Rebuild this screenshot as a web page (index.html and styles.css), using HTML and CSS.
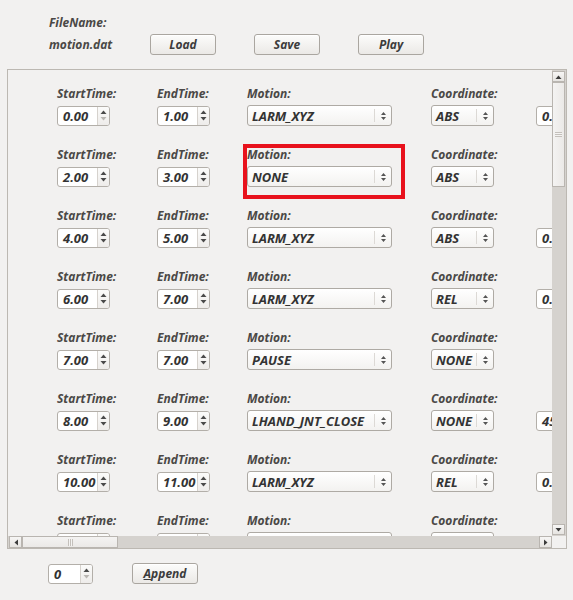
FILE: index.html
```html
<!DOCTYPE html>
<html>
<head>
<meta charset="utf-8">
<link rel="stylesheet" href="styles.css">
</head>
<body>
<div class="top">
  <span class="lbl">FileName:</span>
  <div class="toprow">
    <span class="lbl fname">motion.dat</span>
    <button class="btn">Load</button>
    <button class="btn">Save</button>
    <button class="btn">Play</button>
  </div>
</div>

<div class="frame">
  <div class="main">
    <div class="viewport">
      <div class="rows">
        <!-- row 1 -->
        <div class="row">
          <div class="cell"><span class="lbl">StartTime:</span><div class="w"><div class="spin"><span class="val">0.00</span><span class="arr"><svg class="up" width="7" height="4" viewBox="0 0 7 4"><path d="M0.5 4L3.5 0.5L6.5 4Z"/></svg><svg class="dn off" width="7" height="4" viewBox="0 0 7 4"><path d="M0.5 0L3.5 3.5L6.5 0Z"/></svg></span></div></div></div>
          <div class="cell"><span class="lbl">EndTime:</span><div class="w"><div class="spin"><span class="val">1.00</span><span class="arr"><svg class="up" width="7" height="4" viewBox="0 0 7 4"><path d="M0.5 4L3.5 0.5L6.5 4Z"/></svg><svg class="dn" width="7" height="4" viewBox="0 0 7 4"><path d="M0.5 0L3.5 3.5L6.5 0Z"/></svg></span></div></div></div>
          <div class="cell"><span class="lbl">Motion:</span><div class="w"><div class="combo wide"><span class="val">LARM_XYZ</span><span class="sep"></span><span class="ar"><svg width="7" height="10" viewBox="0 0 7 10"><path d="M1 4L3.5 1L6 4Z M1 6L3.5 9L6 6Z"/></svg></span></div></div></div>
          <div class="cell"><span class="lbl">Coordinate:</span><div class="w"><div class="combo narrow"><span class="val">ABS</span><span class="sep"></span><span class="ar"><svg width="7" height="10" viewBox="0 0 7 10"><path d="M1 4L3.5 1L6 4Z M1 6L3.5 9L6 6Z"/></svg></span></div></div></div>
          <div class="cell"><span class="lbl">&nbsp;</span><div class="w"><div class="spin"><span class="val">0.00</span></div></div></div>
        </div>
        <!-- row 2 -->
        <div class="row">
          <div class="cell"><span class="lbl">StartTime:</span><div class="w"><div class="spin"><span class="val">2.00</span><span class="arr"><svg class="up" width="7" height="4" viewBox="0 0 7 4"><path d="M0.5 4L3.5 0.5L6.5 4Z"/></svg><svg class="dn" width="7" height="4" viewBox="0 0 7 4"><path d="M0.5 0L3.5 3.5L6.5 0Z"/></svg></span></div></div></div>
          <div class="cell"><span class="lbl">EndTime:</span><div class="w"><div class="spin"><span class="val">3.00</span><span class="arr"><svg class="up" width="7" height="4" viewBox="0 0 7 4"><path d="M0.5 4L3.5 0.5L6.5 4Z"/></svg><svg class="dn" width="7" height="4" viewBox="0 0 7 4"><path d="M0.5 0L3.5 3.5L6.5 0Z"/></svg></span></div></div></div>
          <div class="cell hl"><span class="lbl">Motion:</span><div class="w"><div class="combo wide"><span class="val">NONE</span><span class="sep"></span><span class="ar"><svg width="7" height="10" viewBox="0 0 7 10"><path d="M1 4L3.5 1L6 4Z M1 6L3.5 9L6 6Z"/></svg></span></div></div><div class="redbox"></div></div>
          <div class="cell"><span class="lbl">Coordinate:</span><div class="w"><div class="combo narrow"><span class="val">ABS</span><span class="sep"></span><span class="ar"><svg width="7" height="10" viewBox="0 0 7 10"><path d="M1 4L3.5 1L6 4Z M1 6L3.5 9L6 6Z"/></svg></span></div></div></div>
          <div class="cell"></div>
        </div>
        <!-- row 3 -->
        <div class="row">
          <div class="cell"><span class="lbl">StartTime:</span><div class="w"><div class="spin"><span class="val">4.00</span><span class="arr"><svg class="up" width="7" height="4" viewBox="0 0 7 4"><path d="M0.5 4L3.5 0.5L6.5 4Z"/></svg><svg class="dn" width="7" height="4" viewBox="0 0 7 4"><path d="M0.5 0L3.5 3.5L6.5 0Z"/></svg></span></div></div></div>
          <div class="cell"><span class="lbl">EndTime:</span><div class="w"><div class="spin"><span class="val">5.00</span><span class="arr"><svg class="up" width="7" height="4" viewBox="0 0 7 4"><path d="M0.5 4L3.5 0.5L6.5 4Z"/></svg><svg class="dn" width="7" height="4" viewBox="0 0 7 4"><path d="M0.5 0L3.5 3.5L6.5 0Z"/></svg></span></div></div></div>
          <div class="cell"><span class="lbl">Motion:</span><div class="w"><div class="combo wide"><span class="val">LARM_XYZ</span><span class="sep"></span><span class="ar"><svg width="7" height="10" viewBox="0 0 7 10"><path d="M1 4L3.5 1L6 4Z M1 6L3.5 9L6 6Z"/></svg></span></div></div></div>
          <div class="cell"><span class="lbl">Coordinate:</span><div class="w"><div class="combo narrow"><span class="val">ABS</span><span class="sep"></span><span class="ar"><svg width="7" height="10" viewBox="0 0 7 10"><path d="M1 4L3.5 1L6 4Z M1 6L3.5 9L6 6Z"/></svg></span></div></div></div>
          <div class="cell"><span class="lbl">&nbsp;</span><div class="w"><div class="spin"><span class="val">0.00</span></div></div></div>
        </div>
        <!-- row 4 -->
        <div class="row">
          <div class="cell"><span class="lbl">StartTime:</span><div class="w"><div class="spin"><span class="val">6.00</span><span class="arr"><svg class="up" width="7" height="4" viewBox="0 0 7 4"><path d="M0.5 4L3.5 0.5L6.5 4Z"/></svg><svg class="dn" width="7" height="4" viewBox="0 0 7 4"><path d="M0.5 0L3.5 3.5L6.5 0Z"/></svg></span></div></div></div>
          <div class="cell"><span class="lbl">EndTime:</span><div class="w"><div class="spin"><span class="val">7.00</span><span class="arr"><svg class="up" width="7" height="4" viewBox="0 0 7 4"><path d="M0.5 4L3.5 0.5L6.5 4Z"/></svg><svg class="dn" width="7" height="4" viewBox="0 0 7 4"><path d="M0.5 0L3.5 3.5L6.5 0Z"/></svg></span></div></div></div>
          <div class="cell"><span class="lbl">Motion:</span><div class="w"><div class="combo wide"><span class="val">LARM_XYZ</span><span class="sep"></span><span class="ar"><svg width="7" height="10" viewBox="0 0 7 10"><path d="M1 4L3.5 1L6 4Z M1 6L3.5 9L6 6Z"/></svg></span></div></div></div>
          <div class="cell"><span class="lbl">Coordinate:</span><div class="w"><div class="combo narrow"><span class="val">REL</span><span class="sep"></span><span class="ar"><svg width="7" height="10" viewBox="0 0 7 10"><path d="M1 4L3.5 1L6 4Z M1 6L3.5 9L6 6Z"/></svg></span></div></div></div>
          <div class="cell"><span class="lbl">&nbsp;</span><div class="w"><div class="spin"><span class="val">0.00</span></div></div></div>
        </div>
        <!-- row 5 -->
        <div class="row">
          <div class="cell"><span class="lbl">StartTime:</span><div class="w"><div class="spin"><span class="val">7.00</span><span class="arr"><svg class="up" width="7" height="4" viewBox="0 0 7 4"><path d="M0.5 4L3.5 0.5L6.5 4Z"/></svg><svg class="dn" width="7" height="4" viewBox="0 0 7 4"><path d="M0.5 0L3.5 3.5L6.5 0Z"/></svg></span></div></div></div>
          <div class="cell"><span class="lbl">EndTime:</span><div class="w"><div class="spin"><span class="val">7.00</span><span class="arr"><svg class="up" width="7" height="4" viewBox="0 0 7 4"><path d="M0.5 4L3.5 0.5L6.5 4Z"/></svg><svg class="dn" width="7" height="4" viewBox="0 0 7 4"><path d="M0.5 0L3.5 3.5L6.5 0Z"/></svg></span></div></div></div>
          <div class="cell"><span class="lbl">Motion:</span><div class="w"><div class="combo wide"><span class="val">PAUSE</span><span class="sep"></span><span class="ar"><svg width="7" height="10" viewBox="0 0 7 10"><path d="M1 4L3.5 1L6 4Z M1 6L3.5 9L6 6Z"/></svg></span></div></div></div>
          <div class="cell"><span class="lbl">Coordinate:</span><div class="w"><div class="combo narrow"><span class="val">NONE</span><span class="sep"></span><span class="ar"><svg width="7" height="10" viewBox="0 0 7 10"><path d="M1 4L3.5 1L6 4Z M1 6L3.5 9L6 6Z"/></svg></span></div></div></div>
          <div class="cell"></div>
        </div>
        <!-- row 6 -->
        <div class="row">
          <div class="cell"><span class="lbl">StartTime:</span><div class="w"><div class="spin"><span class="val">8.00</span><span class="arr"><svg class="up" width="7" height="4" viewBox="0 0 7 4"><path d="M0.5 4L3.5 0.5L6.5 4Z"/></svg><svg class="dn" width="7" height="4" viewBox="0 0 7 4"><path d="M0.5 0L3.5 3.5L6.5 0Z"/></svg></span></div></div></div>
          <div class="cell"><span class="lbl">EndTime:</span><div class="w"><div class="spin"><span class="val">9.00</span><span class="arr"><svg class="up" width="7" height="4" viewBox="0 0 7 4"><path d="M0.5 4L3.5 0.5L6.5 4Z"/></svg><svg class="dn" width="7" height="4" viewBox="0 0 7 4"><path d="M0.5 0L3.5 3.5L6.5 0Z"/></svg></span></div></div></div>
          <div class="cell"><span class="lbl">Motion:</span><div class="w"><div class="combo wide"><span class="val">LHAND_JNT_CLOSE</span><span class="sep"></span><span class="ar"><svg width="7" height="10" viewBox="0 0 7 10"><path d="M1 4L3.5 1L6 4Z M1 6L3.5 9L6 6Z"/></svg></span></div></div></div>
          <div class="cell"><span class="lbl">Coordinate:</span><div class="w"><div class="combo narrow"><span class="val">NONE</span><span class="sep"></span><span class="ar"><svg width="7" height="10" viewBox="0 0 7 10"><path d="M1 4L3.5 1L6 4Z M1 6L3.5 9L6 6Z"/></svg></span></div></div></div>
          <div class="cell"><span class="lbl">&nbsp;</span><div class="w"><div class="spin"><span class="val">45.00</span></div></div></div>
        </div>
        <!-- row 7 -->
        <div class="row">
          <div class="cell"><span class="lbl">StartTime:</span><div class="w"><div class="spin"><span class="val">10.00</span><span class="arr"><svg class="up" width="7" height="4" viewBox="0 0 7 4"><path d="M0.5 4L3.5 0.5L6.5 4Z"/></svg><svg class="dn" width="7" height="4" viewBox="0 0 7 4"><path d="M0.5 0L3.5 3.5L6.5 0Z"/></svg></span></div></div></div>
          <div class="cell"><span class="lbl">EndTime:</span><div class="w"><div class="spin"><span class="val">11.00</span><span class="arr"><svg class="up" width="7" height="4" viewBox="0 0 7 4"><path d="M0.5 4L3.5 0.5L6.5 4Z"/></svg><svg class="dn" width="7" height="4" viewBox="0 0 7 4"><path d="M0.5 0L3.5 3.5L6.5 0Z"/></svg></span></div></div></div>
          <div class="cell"><span class="lbl">Motion:</span><div class="w"><div class="combo wide"><span class="val">LARM_XYZ</span><span class="sep"></span><span class="ar"><svg width="7" height="10" viewBox="0 0 7 10"><path d="M1 4L3.5 1L6 4Z M1 6L3.5 9L6 6Z"/></svg></span></div></div></div>
          <div class="cell"><span class="lbl">Coordinate:</span><div class="w"><div class="combo narrow"><span class="val">REL</span><span class="sep"></span><span class="ar"><svg width="7" height="10" viewBox="0 0 7 10"><path d="M1 4L3.5 1L6 4Z M1 6L3.5 9L6 6Z"/></svg></span></div></div></div>
          <div class="cell"><span class="lbl">&nbsp;</span><div class="w"><div class="spin"><span class="val">0.00</span></div></div></div>
        </div>
        <!-- row 8 -->
        <div class="row">
          <div class="cell"><span class="lbl">StartTime:</span><div class="w"><div class="spin"><span class="val">12.00</span><span class="arr"><svg class="up" width="7" height="4" viewBox="0 0 7 4"><path d="M0.5 4L3.5 0.5L6.5 4Z"/></svg><svg class="dn" width="7" height="4" viewBox="0 0 7 4"><path d="M0.5 0L3.5 3.5L6.5 0Z"/></svg></span></div></div></div>
          <div class="cell"><span class="lbl">EndTime:</span><div class="w"><div class="spin"><span class="val">13.00</span><span class="arr"><svg class="up" width="7" height="4" viewBox="0 0 7 4"><path d="M0.5 4L3.5 0.5L6.5 4Z"/></svg><svg class="dn" width="7" height="4" viewBox="0 0 7 4"><path d="M0.5 0L3.5 3.5L6.5 0Z"/></svg></span></div></div></div>
          <div class="cell"><span class="lbl">Motion:</span><div class="w"><div class="combo wide"><span class="val">NONE</span><span class="sep"></span><span class="ar"><svg width="7" height="10" viewBox="0 0 7 10"><path d="M1 4L3.5 1L6 4Z M1 6L3.5 9L6 6Z"/></svg></span></div></div></div>
          <div class="cell"><span class="lbl">Coordinate:</span><div class="w"><div class="combo narrow"><span class="val">ABS</span><span class="sep"></span><span class="ar"><svg width="7" height="10" viewBox="0 0 7 10"><path d="M1 4L3.5 1L6 4Z M1 6L3.5 9L6 6Z"/></svg></span></div></div></div>
          <div class="cell"></div>
        </div>
      </div>
    </div>
    <div class="vscroll">
      <div class="sbtn vb"><svg width="7" height="4" viewBox="0 0 7 4"><path d="M0.5 4L3.5 0.5L6.5 4Z"/></svg></div>
      <div class="vthumb"><span class="grip"></span></div>
      <div class="trough"></div>
      <div class="sbtn vb"><svg width="7" height="4" viewBox="0 0 7 4"><path d="M0.5 0L3.5 3.5L6.5 0Z"/></svg></div>
    </div>
  </div>
  <div class="hrow">
    <div class="hscroll">
      <div class="sbtn hb"><svg width="4" height="7" viewBox="0 0 4 7"><path d="M4 0.5L0.5 3.5L4 6.5Z"/></svg></div>
      <div class="hthumb"><span class="hgrip"></span></div>
      <div class="trough"></div>
      <div class="sbtn hb"><svg width="4" height="7" viewBox="0 0 4 7"><path d="M0 0.5L3.5 3.5L0 6.5Z"/></svg></div>
    </div>
    <div class="corner"></div>
  </div>
</div>

<div class="bottom">
  <div class="spin small"><span class="val">0</span><span class="arr"><svg class="up" width="7" height="4" viewBox="0 0 7 4"><path d="M0.5 4L3.5 0.5L6.5 4Z"/></svg><svg class="dn off" width="7" height="4" viewBox="0 0 7 4"><path d="M0.5 0L3.5 3.5L6.5 0Z"/></svg></span></div>
  <button class="btn"><u>A</u>ppend</button>
</div>
</body>
</html>
```

FILE: styles.css
```css
* { box-sizing: border-box; margin: 0; padding: 0; }

body {
  background: #f2f1f0;
  width: 573px;
  height: 600px;
  overflow: hidden;
  font-family: "Open Sans", Lato, sans-serif;
  font-weight: bold;
  font-style: italic;
  font-size: 12px;
  color: #4a4846;
}

.lbl { display: block; line-height: 14px; white-space: nowrap; }

.top { height: 69px; padding: 16px 0 0 49px; }
.toprow { display: flex; align-items: center; gap: 38px; margin-top: 4px; }
.fname { width: 63px; }

.btn {
  width: 66px;
  height: 21px;
  border: 1px solid #aaa6a0;
  border-radius: 3px;
  background: linear-gradient(#fcfcfb, #ebe9e6);
  font: inherit;
  color: #3c3c3c;
  box-shadow: inset 0 1px 0 #fff;
}
.btn u { text-decoration: underline; }

.frame {
  margin-left: 7px;
  width: 560px;
  height: 480px;
  border: 1px solid #bcb8b2;
  display: flex;
  flex-direction: column;
}

.main { display: flex; height: 466px; }

.viewport {
  width: 544px;
  overflow: hidden;
  padding: 17px 0 0 49px;
  position: relative;
}

.rows { display: flex; flex-direction: column; gap: 22px; width: max-content; }
.row { display: grid; grid-template-columns: 100px 90px 184px 105px 60px; }
.cell { display: flex; flex-direction: column; gap: 4px; position: relative; }
.w { height: 21px; display: flex; align-items: center; }

.spin {
  width: 53px;
  height: 20px;
  border: 1px solid #b3afa9;
  border-radius: 3px;
  background: #fff;
  display: flex;
  overflow: hidden;
}
.spin .val { flex: 1; padding-left: 5px; line-height: 18px; font-size: 13px; color: #333; white-space: nowrap; overflow: hidden; }
.spin .arr {
  width: 12px;
  flex: none;
  border-left: 1px solid #d6d2cd;
  background: linear-gradient(#fbfbfa, #eeecea);
  display: flex;
  flex-direction: column;
  align-items: center;
  justify-content: space-around;
  padding: 2px 0;
}
.spin svg path { fill: #4a4a4a; }
.spin svg.off path { fill: #b9b6b2; }
.spin.small { width: 45px; }

.combo {
  height: 21px;
  border: 1px solid #aeaaa4;
  border-radius: 3px;
  background: linear-gradient(#ffffff, #f3f2f0);
  display: flex;
  align-items: center;
}
.combo.wide { width: 145px; }
.combo.narrow { width: 63px; }
.combo .val { flex: 1; padding-left: 4px; font-size: 13px; color: #333; white-space: nowrap; }
.combo .sep { width: 1px; height: 13px; background: #dcd9d5; }
.combo .ar { width: 16px; display: flex; justify-content: center; }
.combo svg path { fill: #555; }

.redbox {
  position: absolute;
  left: -4px;
  top: -4px;
  width: 162px;
  height: 55px;
  border: 4px solid #e8121c;
}

.vscroll {
  width: 14px;
  display: flex;
  flex-direction: column;
  padding: 1px 1px 1px 0;
  background: #d5d2ce;
}
.sbtn {
  background: linear-gradient(#f7f6f5, #e6e4e1);
  border: 1px solid #b9b5b0;
  display: flex;
  align-items: center;
  justify-content: center;
  flex: none;
}
.sbtn svg path { fill: #3c3c3c; }
.vb { height: 11px; }
.vthumb {
  height: 105px;
  background: linear-gradient(90deg, #f4f3f2, #ebe9e7);
  border: 1px solid #b9b5b0;
  display: flex;
  align-items: center;
  justify-content: center;
  flex: none;
}
.grip {
  width: 7px;
  height: 5px;
  border-top: 1px solid #c4c0bb;
  border-bottom: 1px solid #c4c0bb;
  background: linear-gradient(#f4f3f2 40%, #c4c0bb 40%, #c4c0bb 60%, #f4f3f2 60%);
}
.trough { flex: 1; background: #d5d2ce; }

.hrow { display: flex; height: 12px; }
.hscroll { width: 544px; display: flex; background: #d5d2ce; padding-left: 1px; }
.hb { width: 13px; }
.hthumb {
  width: 96px;
  flex: none;
  background: linear-gradient(#f4f3f2, #ebe9e7);
  border: 1px solid #b9b5b0;
  display: flex;
  align-items: center;
  justify-content: center;
}
.hgrip {
  width: 5px;
  height: 7px;
  border-left: 1px solid #c4c0bb;
  border-right: 1px solid #c4c0bb;
  background: linear-gradient(90deg, #f4f3f2 40%, #c4c0bb 40%, #c4c0bb 60%, #f4f3f2 60%);
}
.corner { width: 14px; background: #f2f1f0; }

.bottom {
  display: flex;
  align-items: center;
  gap: 39px;
  padding-left: 48px;
  margin-top: 14px;
}
```
